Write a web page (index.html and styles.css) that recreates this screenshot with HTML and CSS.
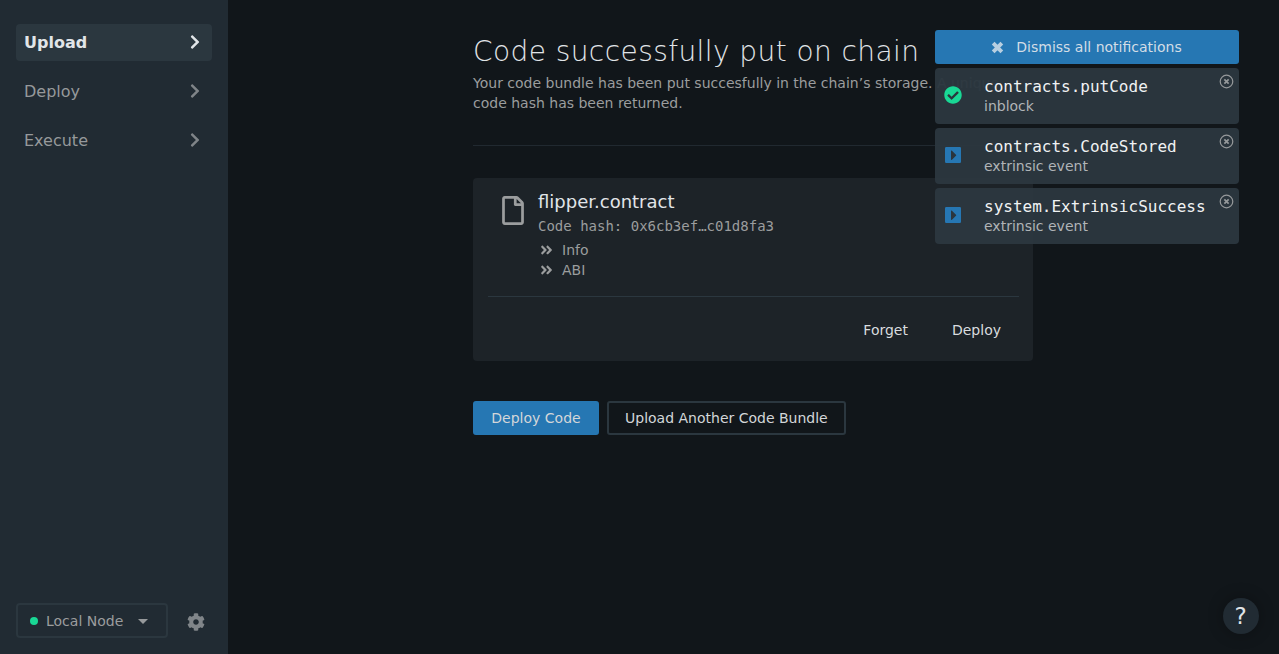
FILE: index.html
```html
<!DOCTYPE html>
<html lang="en">
<head>
<meta charset="utf-8">
<title>Code successfully put on chain</title>
<link rel="stylesheet" href="styles.css">
</head>
<body>
<svg class="defs" aria-hidden="true">
  <symbol id="chevron" viewBox="0 0 320 512"><path d="M285.476 272.971L91.132 467.314c-9.373 9.373-24.569 9.373-33.941 0l-22.667-22.667c-9.357-9.357-9.375-24.522-.04-33.901L188.505 256 34.484 101.255c-9.335-9.379-9.317-24.544.04-33.901l22.667-22.667c9.373-9.373 24.569-9.373 33.941 0L285.475 239.03c9.373 9.372 9.373 24.568.001 33.941z"/></symbol>
  <symbol id="double" viewBox="0 0 448 512"><path d="M224.3 273l-136 136c-9.4 9.4-24.600 9.400-33.900 0l-22.600-22.600c-9.400-9.400-9.400-24.600 0-33.900l96.400-96.400-96.400-96.400c-9.400-9.400-9.400-24.600 0-33.900L54.300 103c9.400-9.400 24.600-9.400 33.900 0l136 136c9.500 9.400 9.500 24.600.1 34zm192-34l-136-136c-9.400-9.400-24.600-9.400-33.900 0l-22.600 22.600c-9.400 9.400-9.400 24.600 0 33.900l96.400 96.400-96.400 96.400c-9.400 9.400-9.400 24.600 0 33.900l22.600 22.600c9.400 9.400 24.600 9.400 33.900 0l136-136c9.400-9.200 9.400-24.400 0-33.800z" transform="translate(0 0)"/></symbol>
  <symbol id="close" viewBox="0 0 16 16"><circle cx="8" cy="8" r="6.700" fill="none" stroke="currentColor" stroke-width="1.300"/><path d="M5.700 5.700l4.600 4.600M10.300 5.700l-4.600 4.600" stroke="currentColor" stroke-width="1.800"/></symbol>
  <symbol id="event" viewBox="0 0 16 16"><path fill-rule="evenodd" d="M1.200 0h13.600a1.200 1.200 0 0 1 1.200 1.200v13.600a1.200 1.200 0 0 1-1.200 1.200H1.200A1.200 1.200 0 0 1 0 14.800V1.200A1.200 1.200 0 0 1 1.200 0zM6 3.700v9.100l.7.100 4.500-4.300v-.7L6.700 3.500z"/></symbol>
</svg>
<div class="app">
  <aside class="sidebar">
    <nav class="menu">
      <a class="menu-item active">Upload<svg class="chevron"><use href="#chevron"/></svg></a>
      <a class="menu-item">Deploy<svg class="chevron"><use href="#chevron"/></svg></a>
      <a class="menu-item">Execute<svg class="chevron"><use href="#chevron"/></svg></a>
    </nav>
    <div class="status">
      <div class="node"><span class="dot"></span><span>Local Node</span><span class="caret"></span></div>
      <svg class="gear" viewBox="0 0 512 512"><path d="M487.400 315.700l-42.600-24.600c4.300-23.200 4.300-47 0-70.200l42.600-24.600c4.900-2.800 7.100-8.600 5.500-14-11.100-35.600-30-67.800-54.700-94.600-3.800-4.100-10-5.100-14.800-2.300L380.800 110c-17.900-15.400-38.500-27.300-60.800-35.100V25.800c0-5.600-3.900-10.500-9.400-11.700-36.700-8.200-74.300-7.800-109.200 0-5.500 1.200-9.400 6.100-9.400 11.700V75c-22.200 7.900-42.800 19.800-60.800 35.100L88.700 85.500c-4.900-2.800-11-1.900-14.800 2.300-24.700 26.700-43.600 58.900-54.700 94.600-1.700 5.400.6 11.200 5.500 14L67.300 221c-4.300 23.200-4.300 47 0 70.200l-42.600 24.600c-4.900 2.800-7.100 8.600-5.500 14 11.100 35.600 30 67.800 54.700 94.600 3.800 4.100 10 5.100 14.800 2.300l42.600-24.600c17.900 15.400 38.500 27.300 60.800 35.100v49.200c0 5.600 3.900 10.500 9.400 11.700 36.700 8.200 74.300 7.800 109.200 0 5.500-1.200 9.400-6.100 9.400-11.700v-49.200c22.200-7.900 42.800-19.800 60.800-35.100l42.600 24.600c4.900 2.800 11 1.900 14.800-2.300 24.700-26.700 43.600-58.900 54.700-94.600 1.500-5.500-.7-11.300-5.600-14.100zM256 336c-44.100 0-80-35.900-80-80s35.900-80 80-80 80 35.900 80 80-35.900 80-80 80z"/></svg>
    </div>
  </aside>
  <main class="main">
    <h1 class="title">Code successfully put on chain</h1>
    <p class="lead">Your code bundle has been put succesfully in the chain’s storage. A unique code hash has been returned.</p>
    <section class="card">
      <div class="card-body">
        <svg class="file" viewBox="0 0 384 512"><path d="M369.900 97.900L286 14C277 5 264.800-.1 252.100-.1H48C21.500 0 0 21.500 0 48v416c0 26.500 21.500 48 48 48h288c26.500 0 48-21.500 48-48V131.900c0-12.700-5.100-25-14.100-34zM332.100 128H256V51.900l76.100 76.100zM48 464V48h160v104c0 13.300 10.700 24 24 24h104v288H48z"/></svg>
        <div class="details">
          <div class="name">flipper.contract</div>
          <div class="hash">Code hash: 0x6cb3ef…c01d8fa3</div>
          <div class="toggle"><svg class="double"><use href="#double"/></svg>Info</div>
          <div class="toggle"><svg class="double"><use href="#double"/></svg>ABI</div>
        </div>
      </div>
      <div class="card-actions"><span>Forget</span><span>Deploy</span></div>
    </section>
    <div class="buttons">
      <button class="button primary">Deploy Code</button>
      <button class="button">Upload Another Code Bundle</button>
    </div>
  </main>
</div>
<div class="notices">
  <div class="dismiss"><svg class="cross" viewBox="0 0 12 12"><path d="M2 2l8 8M10 2L2 10"/></svg>Dismiss all notifications</div>
  <div class="notice">
    <svg class="state done" viewBox="0 0 512 512"><path d="M504 256c0 136.967-111.033 248-248 248S8 392.967 8 256 119.033 8 256 8s248 111.033 248 248zM227.314 387.314l184-184c6.248-6.248 6.248-16.379 0-22.627l-22.627-22.627c-6.248-6.249-16.379-6.249-22.628 0L216 308.118l-70.059-70.059c-6.248-6.248-16.379-6.248-22.628 0l-22.627 22.627c-6.248 6.248-6.248 16.379 0 22.627l104 104c6.249 6.249 16.379 6.249 22.628.001z"/></svg>
    <div><div class="event-name">contracts.putCode</div><div class="event-kind">inblock</div></div>
    <svg class="close"><use href="#close"/></svg>
  </div>
  <div class="notice">
    <svg class="state event"><use href="#event"/></svg>
    <div><div class="event-name">contracts.CodeStored</div><div class="event-kind">extrinsic event</div></div>
    <svg class="close"><use href="#close"/></svg>
  </div>
  <div class="notice">
    <svg class="state event"><use href="#event"/></svg>
    <div><div class="event-name">system.ExtrinsicSuccess</div><div class="event-kind">extrinsic event</div></div>
    <svg class="close"><use href="#close"/></svg>
  </div>
</div>
<div class="help">?</div>
</body>
</html>
```
FILE: styles.css
```css
* { box-sizing: border-box; }
body {
  margin: 0;
  background: #11161a;
  color: #9b9d9e;
  font: 14px/20px "DejaVu Sans", sans-serif;
  overflow: hidden;
}
svg { display: block; fill: currentColor; flex: none; }
.defs { position: absolute; width: 0; height: 0; }
.app { display: flex; height: 654px; }
.sidebar {
  width: 228px;
  flex: none;
  padding: 24px 16px 16px;
  background: #212b33;
  display: flex;
  flex-direction: column;
  justify-content: space-between;
}
.menu { display: flex; flex-direction: column; gap: 12px; }
.menu-item {
  display: flex;
  align-items: center;
  justify-content: space-between;
  height: 37px;
  padding: 0 12.5px 0 8px;
  border-radius: 4px;
  font-size: 16px;
  color: #96999b;
}
.active { background: #2b373f; color: #e1e5e8; font-weight: bold; }
.chevron { width: 10px; height: 16px; margin-bottom: 1px; color: #7f8488; }
.active .chevron { color: #e1e5e8; }
.status { display: flex; align-items: center; gap: 19px; }
.node {
  display: flex;
  align-items: center;
  width: 152px;
  height: 35px;
  padding: 0 12px;
  border: 2px solid #2b373f;
  border-radius: 4px;
}
.dot { width: 8px; height: 8px; margin-right: 8px; border-radius: 50%; background: #19d895; }
.caret {
  margin: 2px 0 0 15px;
  border: 5px solid transparent;
  border-top-color: #96999b;
  border-bottom: 0;
}
.gear { width: 18px; height: 18px; margin-top: 2px; color: #808589; }
.main { width: 805px; padding: 34px 0 0 245px; }
.title {
  margin: 0;
  font-size: 28px;
  line-height: 36px;
  font-weight: 200;
  letter-spacing: .42px;
  color: #e1e5e8;
  white-space: nowrap;
}
.lead {
  margin: 3px 0 32px;
  padding-bottom: 32px;
  border-bottom: 1px solid #212930;
}
.card { height: 183px; padding: 0 14px 0 15px; border-radius: 4px; background: #1d2328; }
.card-body {
  display: flex;
  height: 119px;
  padding: 14px 0 0 14px;
  border-bottom: 1px solid #2b373f;
}
.file { width: 22px; height: 29px; margin: 3.5px 14px 0 0; }
.name { font-size: 18px; line-height: 20px; color: #e1e5e8; }
.hash { margin: 4px 0; font-family: "DejaVu Sans Mono", monospace; }
.toggle { display: flex; align-items: center; }
.double { width: 13px; height: 14px; margin: 0 9.500px 1px 1.500px; }
.card-actions {
  display: flex;
  justify-content: flex-end;
  gap: 44px;
  padding: 23px 18px 0 0;
  color: #d9dcdf;
}
.buttons { display: flex; gap: 8px; margin-top: 40px; }
.button {
  height: 34px;
  padding: 0 16px;
  border: 2px solid #2b373f;
  border-radius: 3px;
  background: none;
  color: #d3d6d9;
  font: inherit;
}
.primary { width: 126px; background: #2677b3; border-color: #2677b3; }
.notices {
  position: absolute;
  top: 30px;
  right: 40px;
  width: 304px;
  display: flex;
  flex-direction: column;
  gap: 4px;
}
.dismiss {
  display: flex;
  align-items: center;
  justify-content: center;
  height: 34px;
  padding-right: 1px;
  gap: 12px;
  border-radius: 3px;
  background: #2677b3;
  color: #d3dde6;
}
.cross { width: 13px; height: 13px; stroke: #b8cfe1; stroke-width: 3.6px; }
.notice {
  position: relative;
  display: flex;
  align-items: center;
  height: 56px;
  padding-left: 9px;
  border-radius: 4px;
  background: rgba(43, 55, 63, .97);
}
.state { width: 18px; height: 18px; margin: 0 22px 2px 0; }
.done { color: #19d895; }
.event { width: 16px; height: 16px; margin: 0 23px 2px 1px; color: #2677b3; }
.event-name {
  padding-top: 1px;
  font: 16px/19px "DejaVu Sans Mono", monospace;
  color: #f0f2f3;
}
.event-kind { color: #b0b4b7; }
.close { position: absolute; top: 6px; right: 5px; width: 15px; height: 15px; color: #96999b; }
.help {
  position: absolute;
  right: 20px;
  bottom: 20px;
  width: 36px;
  height: 36px;
  border-radius: 50%;
  background: #212b33;
  box-shadow: 0 0 16px rgba(0, 0, 0, .3);
  color: #e1e5e8;
  font-size: 23px;
  line-height: 36px;
  text-align: center;
  padding-right: 1px;
}
```
